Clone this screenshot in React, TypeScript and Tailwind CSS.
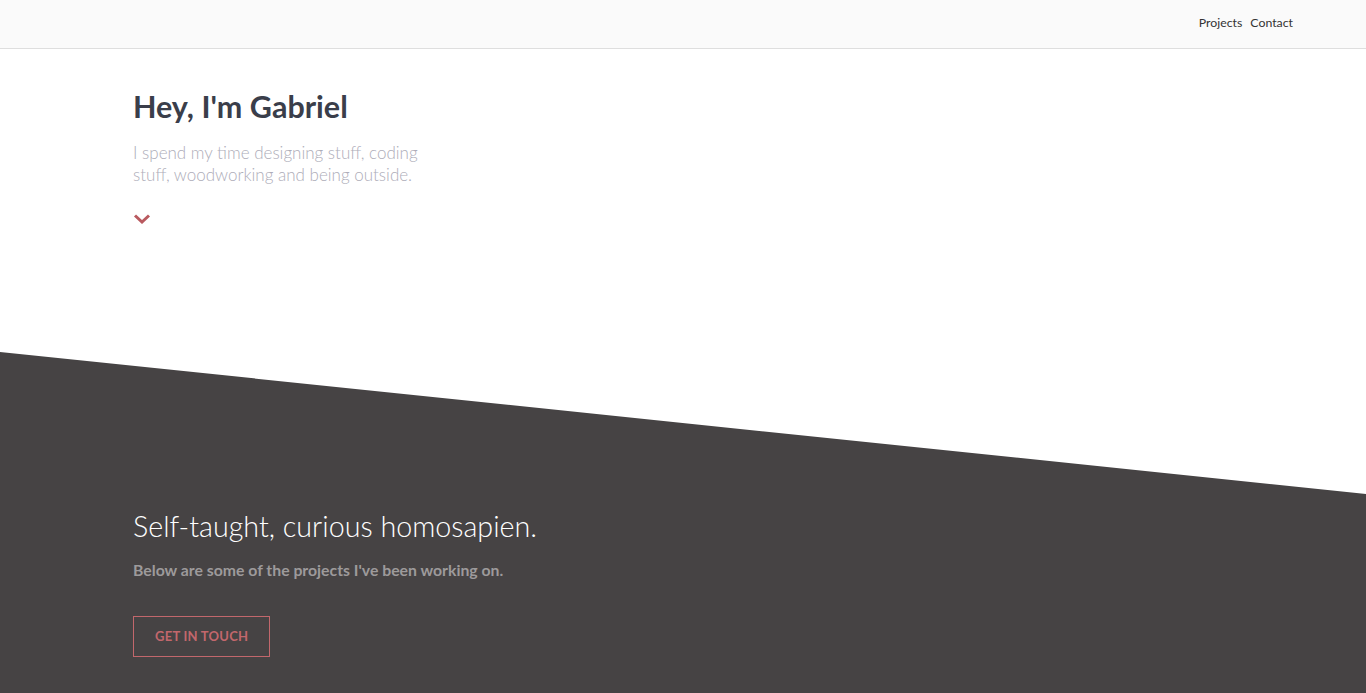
import React from 'react';

const font = { fontFamily: 'Lato, "Open Sans", Arial, sans-serif' };

const Header = () => (
    <header className="h-[49px] bg-[#fafafa] border-b border-[#dedede] flex items-center justify-end px-[73px]">
        <nav className="flex gap-2 text-[12.3px] leading-none pb-[2px] text-[#333]">
            <a href="#projects">Projects</a>
            <a href="#contact">Contact</a>
        </nav>
    </header>
)

const App = () => {
    return (
        <div style={font} className="min-h-screen bg-white overflow-hidden">
            <Header/>

            <section className="h-[303px]">
                <div className="max-w-[1100px] mx-auto pt-[39px]">
                    <h1 className="text-[30.5px] leading-[1.2] font-bold text-[#3a3e4a]">Hey, I'm Gabriel</h1>
                    <p className="mt-[17px] max-w-[300px] text-[17px] leading-[22px] font-light text-[#aeadb9]">
                        I spend my time designing stuff, coding stuff, woodworking and being outside.
                    </p>
                    <a href="#projects" className="block mt-[28px] w-[18px] text-[#b95a5f]">
                        <svg width="18" height="10" viewBox="0 0 18 10" fill="none">
                            <path d="M2 1.5 L9 8 L16 1.5" stroke="currentColor" strokeWidth="3" strokeLinejoin="miter"/>
                        </svg>
                    </a>
                </div>
            </section>

            <section id="projects"
                     className="bg-[#464344] pb-[80px] [clip-path:polygon(0_0,100%_142px,100%_100%,0_100%)]">
                <div className="max-w-[1100px] mx-auto pt-[157px]">
                    <h2 className="text-[28.7px] leading-[1.2] font-light text-white">Self-taught, curious homosapien.</h2>
                    <p className="mt-[15px] text-[15.8px] leading-[24px] font-bold text-[#9d9a9b]">
                        Below are some of the projects I've been working on.
                    </p>
                    <a href="#contact"
                       className="inline-flex items-center justify-center mt-[34px] h-[41px] px-[21px] border border-[#c2676c] text-[13px] font-bold tracking-[0.25px] text-[#c2676c]">
                        GET IN TOUCH
                    </a>
                </div>
            </section>
        </div>
    )
}

export default App;
